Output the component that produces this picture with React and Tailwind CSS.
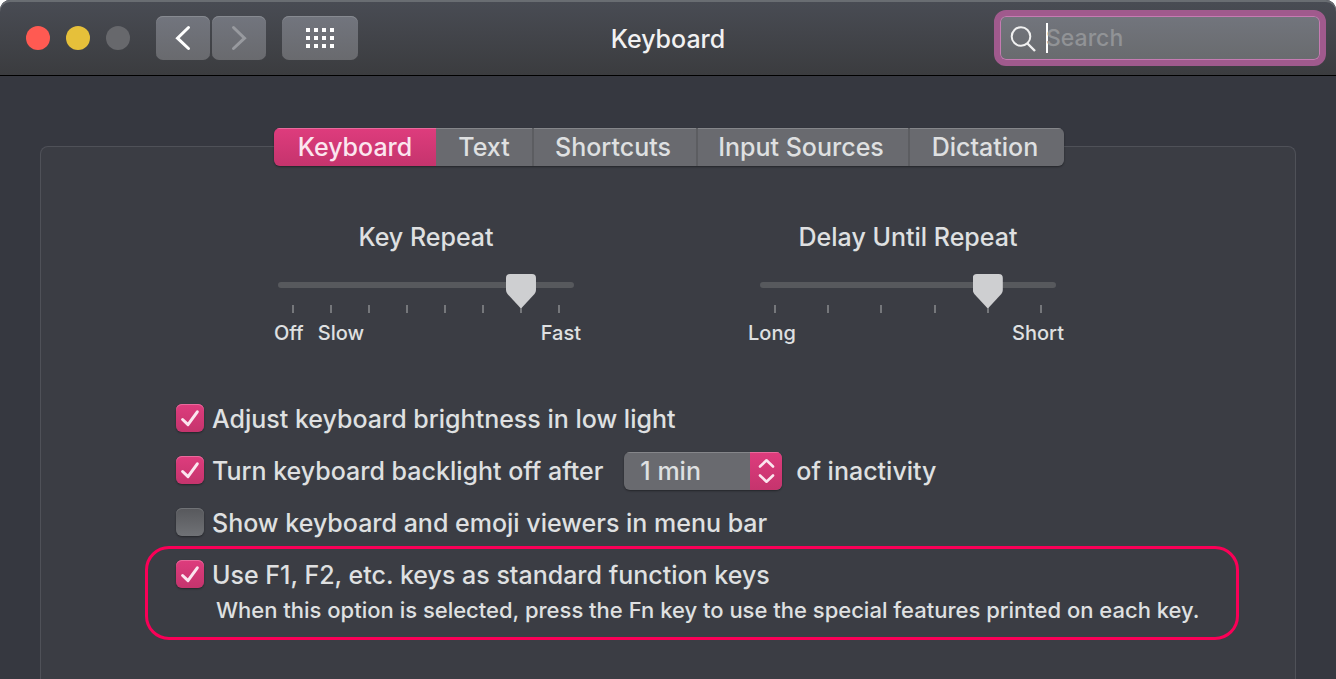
import { useState } from "react";

const TABS = [
  { name: "Keyboard", width: "w-[162px]" },
  { name: "Text", width: "w-[98px] border-r-2" },
  { name: "Shortcuts", width: "w-[164px] border-r-2 pr-1" },
  { name: "Input Sources", width: "w-[212px] border-r-2 pr-1" },
  { name: "Dictation", width: "w-[154px] pr-1" },
];

function TitleBar() {
  return (
    <header className="grid h-[76px] grid-cols-[1fr_auto_1fr] items-center rounded-t-[10px] border-b border-black bg-linear-to-b from-[#494c54] to-[#3b3c3f] px-[10px] shadow-[inset_0_2px_0_#696d72]">
      <div className="flex items-center pl-4">
        <div className="flex gap-4">
          <button aria-label="Close" className="size-6 rounded-full bg-[#ff5a52]" />
          <button aria-label="Minimize" className="size-6 rounded-full bg-[#e6c03a]" />
          <button aria-label="Zoom" disabled className="size-6 rounded-full bg-[#67686c]" />
        </div>
        <div className="ml-[26px] flex gap-0.5">
          <button aria-label="Back" className="h-11 w-[54px] rounded-[7px] bg-linear-to-b from-[#72757e] to-[#696a6e] shadow-[inset_0_1px_0_#878a91]">
            <svg viewBox="0 0 54 44" className="h-11 w-[54px]" fill="none" stroke="#ffffff" strokeWidth="3" strokeLinecap="round" strokeLinejoin="miter">
              <path d="M32.5 11.5 21.5 22.2 32.5 32.5" />
            </svg>
          </button>
          <button aria-label="Forward" disabled className="h-11 w-[54px] rounded-[7px] bg-linear-to-b from-[#72757e] to-[#696a6e] shadow-[inset_0_1px_0_#878a91]">
            <svg viewBox="0 0 54 44" className="h-11 w-[54px]" fill="none" stroke="#989a9f" strokeWidth="3" strokeLinecap="round" strokeLinejoin="miter">
              <path d="M21.5 11.5 32.5 22.2 21.5 32.5" />
            </svg>
          </button>
        </div>
        <button aria-label="Show all" className="ml-4 h-11 w-[76px] rounded-[7px] bg-linear-to-b from-[#72757e] to-[#696a6e] shadow-[inset_0_1px_0_#878a91]">
          <svg viewBox="0 0 76 44" className="h-11 w-[76px]" fill="#ffffff">
            {[12, 20, 28].map((y) =>
              [24, 32, 40, 48].map((x) => <rect key={`${x}-${y}`} x={x} y={y} width="4" height="4" />)
            )}
          </svg>
        </button>
      </div>
      <h1 className="pt-0.5 text-[25px] leading-8 font-medium text-[#f1f1f2]">Keyboard</h1>
      <label className="flex h-14 w-[332px] items-center justify-self-end rounded-xl border-[6px] border-[#a05a8d] bg-linear-to-b from-[#72757d] to-[#696b6e] pl-[10px] shadow-[inset_0_0_0_1px_#c67bb3]">
        <svg viewBox="0 0 26 26" className="mt-0.5 size-[26px] shrink-0" fill="none" stroke="#f0f0f0" strokeWidth="2">
          <circle cx="11" cy="10.5" r="9.3" />
          <path d="M17.5 17.5 25 25" strokeWidth="2.4" />
        </svg>
        <span className="ml-[10px] h-[30px] w-0.5 shrink-0 bg-white" />
        <input type="text" aria-label="Search" placeholder="Search" className="-ml-0.5 h-10 w-full min-w-0 bg-transparent text-[23px] font-medium text-white caret-transparent outline-none placeholder:text-[#919396]" />
      </label>
    </header>
  );
}

function Slider({ id, title, max, value, onChange, children }) {
  return (
    <div className="flex w-[296px] flex-col">
      <label htmlFor={id} className="text-center text-[25px] leading-[30px]">
        {title}
      </label>
      <input
        id={id}
        type="range"
        min="0"
        max={max}
        value={value}
        onChange={(e) => onChange(Number(e.target.value))}
        className="relative z-10 mt-[30px] h-1.5 w-full appearance-none rounded-full bg-[#57595d] outline-none [&::-webkit-slider-thumb]:h-[34px] [&::-webkit-slider-thumb]:w-[30px] [&::-webkit-slider-thumb]:translate-y-[6px] [&::-webkit-slider-thumb]:appearance-none [&::-webkit-slider-thumb]:bg-[#cecfd1] [&::-webkit-slider-thumb]:[clip-path:path('M4_0H26Q30_0_30_4V16Q30_18_28.5_20L16_33.5Q15_34.5_14_33.5L1.5_20Q0_18_0_16V4Q0_0_4_0Z')]"
      />
      <div className="mt-[17px] flex justify-between px-[14px]">
        {Array.from({ length: max + 1 }, (_, i) => (
          <span key={i} className="h-2 w-0.5 bg-[#75777b]" />
        ))}
      </div>
      {children}
    </div>
  );
}

function Check({ id, checked, onChange, label }) {
  return (
    <div className="flex items-center gap-2">
      <span className="grid size-7 shrink-0">
        <input
          id={id}
          type="checkbox"
          checked={checked}
          onChange={(e) => onChange(e.target.checked)}
          className="col-start-1 row-start-1 size-7 appearance-none rounded-[6px] bg-linear-to-b from-[#57585c] to-[#707276] shadow-[inset_0_1px_0_#707276,0_1px_2px_#00000066] checked:from-[#de3c7d] checked:to-[#c5346d] checked:shadow-[inset_0_1px_0_#e96a9c,0_1px_2px_#00000066]"
        />
        {checked && (
          <svg viewBox="0 0 28 28" className="pointer-events-none col-start-1 row-start-1 size-7" fill="none" stroke="#fbe6ef" strokeWidth="3" strokeLinecap="round" strokeLinejoin="round">
            <path d="M6.6 15.5 12 20.6 21.3 7.8" />
          </svg>
        )}
      </span>
      <label htmlFor={id} className="pt-0.5 text-[25px] leading-[30px]">
        {label}
      </label>
    </div>
  );
}

export default function App() {
  const [tab, setTab] = useState("Keyboard");
  const [repeat, setRepeat] = useState(6);
  const [delay, setDelay] = useState(4);
  const [options, setOptions] = useState({ brightness: true, backlight: true, viewers: false, fnKeys: true });
  const set = (key) => (value) => setOptions((o) => ({ ...o, [key]: value }));

  return (
    <div className="min-h-screen bg-white font-['Inter',sans-serif] font-medium">
      <div className="flex min-h-screen flex-col rounded-t-[10px] bg-[#363840] text-[#dfe0e1]">
        <TitleBar />
        <main className="flex grow flex-col px-10 pt-[70px]">
          <section className="grow rounded-t-lg border border-b-0 border-[#4f5158] bg-[#3b3d44]">
            <div className="-mt-[19px] flex justify-center pl-0.5">
              <div role="tablist" className="flex h-[38px] overflow-hidden rounded-[6px] shadow-[0_1px_2px_#00000066]">
                {TABS.map(({ name, width }) => (
                  <button
                    key={name}
                    role="tab"
                    aria-selected={tab === name}
                    onClick={() => setTab(name)}
                    className={`${width} border-[#5c5d61] text-[25px] leading-[30px] ${
                      tab === name
                        ? "bg-linear-to-b from-[#de3c7d] to-[#c5346d] text-[#fbe6ef] shadow-[inset_0_1px_0_#e96a9c]"
                        : "bg-[#696a6f] shadow-[inset_0_1px_0_#85868a]"
                    }`}
                  >
                    {name}
                  </button>
                ))}
              </div>
            </div>

            <div className="mt-14 flex justify-center gap-[186px] pr-0.5">
              <Slider id="repeat" title="Key Repeat" max={7} value={repeat} onChange={setRepeat}>
                <div className="-mr-[7px] -ml-1 mt-2 flex gap-[14px] text-[20px] leading-6">
                  <span>Off</span>
                  <span>Slow</span>
                  <span className="ml-auto">Fast</span>
                </div>
              </Slider>
              <Slider id="delay" title="Delay Until Repeat" max={5} value={delay} onChange={setDelay}>
                <div className="-mr-2 -ml-3 mt-2 flex justify-between text-[20px] leading-6">
                  <span>Long</span>
                  <span>Short</span>
                </div>
              </Slider>
            </div>

            <div className="mt-[47px] pl-[135px]">
              <div className="flex h-[52px] items-center">
                <Check id="brightness" checked={options.brightness} onChange={set("brightness")} label="Adjust keyboard brightness in low light" />
              </div>
              <div className="flex h-[52px] items-center">
                <Check id="backlight" checked={options.backlight} onChange={set("backlight")} label="Turn keyboard backlight off after" />
                <span className="mt-0.5 ml-[21px] grid h-[38px] w-[158px] overflow-hidden rounded-[6px] bg-[#696a6f] shadow-[0_1px_2px_#00000066]">
                  <select aria-label="Backlight timeout" defaultValue="1 min" className="col-start-1 row-start-1 w-full appearance-none pl-4 text-[25px] leading-[30px] shadow-[inset_0_1px_0_#85868a] outline-none">
                    <option>1 min</option>
                    <option>5 min</option>
                  </select>
                  <span className="pointer-events-none col-start-1 row-start-1 h-[38px] w-8 justify-self-end bg-linear-to-b from-[#de3c7d] to-[#c5346d] shadow-[inset_0_1px_0_#e96a9c]">
                    <svg viewBox="0 0 32 38" className="h-[38px] w-8" fill="none" stroke="#fbe6ef" strokeWidth="2.6" strokeLinecap="round" strokeLinejoin="round">
                      <path d="M10 14.5 16.5 8.3 23 14.5M10 23.5 16.5 29.7 23 23.5" />
                    </svg>
                  </span>
                </span>
                <span className="ml-[14px] pt-0.5 text-[25px] leading-[30px]">of inactivity</span>
              </div>
              <div className="flex h-[52px] items-center">
                <Check id="viewers" checked={options.viewers} onChange={set("viewers")} label="Show keyboard and emoji viewers in menu bar" />
              </div>
            </div>
            <div className="-mt-0.5 mr-14 ml-[104px] rounded-[24px] border-[3px] border-[#fa0057] pb-4 pl-7">
              <div className="flex h-[50px] items-center">
                <Check id="fnKeys" checked={options.fnKeys} onChange={set("fnKeys")} label="Use F1, F2, etc. keys as standard function keys" />
              </div>
              <p className="pl-10 text-[22px] leading-[22px]">
                When this option is selected, press the Fn key to use the special features printed on each key.
              </p>
            </div>
          </section>
        </main>
      </div>
    </div>
  );
}
